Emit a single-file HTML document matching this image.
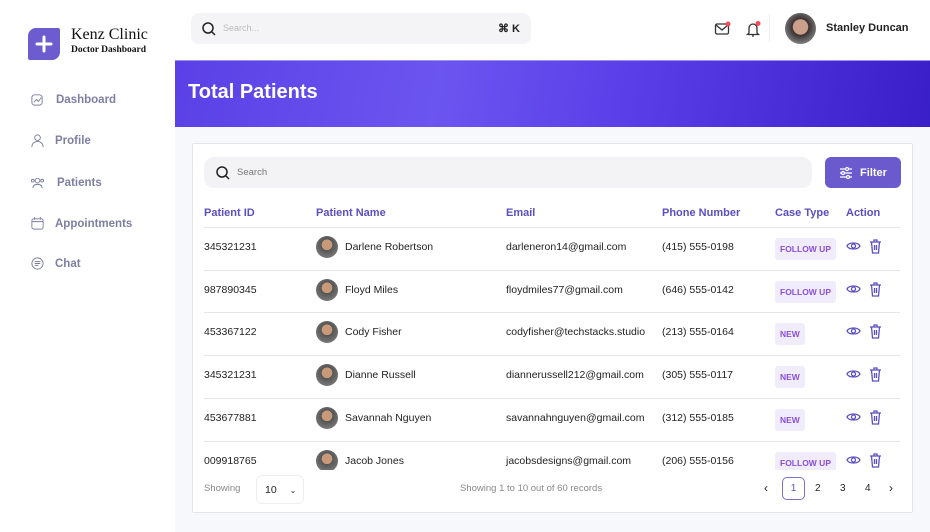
<!DOCTYPE html>
<html><head><meta charset="utf-8"><style>
*{box-sizing:border-box;margin:0;padding:0}
body{width:930px;height:532px;overflow:hidden;background:#f7f8fc;font-family:"Liberation Sans",sans-serif;position:relative;color:#222}
.abs{position:absolute}
.side{left:0;top:0;width:175px;height:532px;background:#fff}
.logo{left:28px;top:28px;width:32px;height:32px;background:#6c5ccf;border-radius:8px 2px 8px 2px}
.nav{left:30px;font-size:11.5px;font-weight:bold;color:#7d7fa3;display:flex;align-items:center;gap:10px}
.nav svg{width:15px;height:15px}
.hdr{left:175px;top:0;width:755px;height:60px;background:#fff}
.banner{left:175px;top:60px;width:755px;height:67px;background:linear-gradient(100deg,#5a40e6 0%,#6b55f0 35%,#5a3ee8 60%,#3a1fc8 100%);border-top:1px solid #9b8ff0}
.card{left:192px;top:143px;width:721px;height:370px;background:#fff;border:1px solid #e3e3ec;border-radius:2px}
.th{top:207px;font-size:11px;color:#5a4fc0;font-weight:bold}
.line{left:204px;width:696px;height:1px;background:#e6e6ea}
.cell{font-size:10.5px;color:#222}
.tag{font-size:8.5px;font-weight:bold;color:#8a4fd8;background:#f1ecfc;padding:6px 5px;border-radius:3px}
.av{width:22px;height:22px;border-radius:50%;background:radial-gradient(circle at 50% 40%,#c99a7a 0 30%,#555 32%,#8a8a8a 100%)}
</style></head><body>
<div class="abs side"></div>
<div class="abs logo"><svg width="32" height="32"><path d="M16 9v14M9 16h14" stroke="#fff" stroke-width="3" stroke-linecap="round"/></svg></div>
<div class="abs" style="left:71px;top:26px;font-family:'Liberation Serif',serif;font-size:16px;color:#111">Kenz Clinic</div>
<div class="abs" style="left:71px;top:45px;font-family:'Liberation Serif',serif;font-size:9.5px;font-weight:bold;color:#111">Doctor Dashboard</div>
<div class="abs nav" style="top:92px"><svg viewBox="0 0 16 16" fill="none" stroke="#7d7fa3"><rect x="2" y="3" width="11" height="11" rx="3"/><path d="M4 11l3-3 2 2 3-4"/></svg><span style="margin-left:1px">Dashboard</span></div>
<div class="abs nav" style="top:133px"><svg viewBox="0 0 16 16" fill="none" stroke="#7d7fa3"><circle cx="8" cy="5" r="3"/><path d="M2 15c0-4 3-6 6-6s6 2 6 6"/></svg>Profile</div>
<div class="abs nav" style="top:175px"><svg viewBox="0 0 16 16" fill="none" stroke="#7d7fa3"><circle cx="8" cy="6" r="2.5"/><path d="M3 14c0-3 2-4 5-4s5 1 5 4"/><circle cx="3" cy="6" r="1.5"/><circle cx="13" cy="6" r="1.5"/></svg><span style="margin-left:2px">Patients</span></div>
<div class="abs nav" style="top:216px"><svg viewBox="0 0 16 16" fill="none" stroke="#7d7fa3"><rect x="2" y="3" width="12" height="11" rx="2"/><path d="M2 6h12M5 1v3M11 1v3"/></svg>Appointments</div>
<div class="abs nav" style="top:256px"><svg viewBox="0 0 16 16" fill="none" stroke="#7d7fa3"><circle cx="8" cy="8" r="6"/><path d="M5 6h6M5 8h6M5 10h4"/></svg>Chat</div>

<div class="abs hdr"></div>
<div class="abs" style="left:191px;top:13px;width:340px;height:31px;background:#f4f4f6;border-radius:8px"></div>
<svg class="abs" style="left:201px;top:21px" width="15" height="15" fill="none" stroke="#222" stroke-width="1.5"><circle cx="7" cy="7" r="5"/><path d="M11 11l3 3"/></svg>
<div class="abs" style="left:223px;top:23px;font-size:9px;color:#bbb">Search...</div>
<div class="abs" style="left:498px;top:22px;font-size:11px;font-weight:bold;color:#222">⌘ K</div>
<svg class="abs" style="left:714px;top:21px" width="18" height="16" fill="none" stroke="#333" stroke-width="1.3"><rect x="1.5" y="3" width="13" height="10" rx="1.5"/><path d="M2 4l6 5 6-5"/><circle cx="14" cy="3" r="2.5" fill="#ee4b5b" stroke="none"/></svg>
<svg class="abs" style="left:745px;top:20px" width="18" height="18" fill="none" stroke="#333" stroke-width="1.3"><path d="M4 13V8a4 4 0 018 0v5l1.5 1.5h-11z M7 16h2"/><circle cx="13" cy="3.5" r="2.5" fill="#ee4b5b" stroke="none"/></svg>
<div class="abs" style="left:769px;top:14px;width:1px;height:28px;background:#eee"></div>
<div class="abs" style="left:785px;top:13px;width:31px;height:31px;border-radius:50%;background:radial-gradient(circle at 50% 45%,#caa08c 0 32%,#3a3030 35%,#777 70%,#ccc 100%)"></div>
<div class="abs" style="left:826px;top:22px;font-size:11px;font-weight:bold;color:#222">Stanley Duncan</div>

<div class="abs banner"></div>
<div class="abs" style="left:188px;top:81px;font-size:20px;font-weight:bold;color:#fff">Total Patients</div>

<div class="abs card"></div>
<div class="abs" style="left:204px;top:157px;width:608px;height:31px;background:#f3f3f5;border-radius:10px"></div>
<svg class="abs" style="left:215px;top:165px" width="15" height="15" fill="none" stroke="#222" stroke-width="1.5"><circle cx="7" cy="7" r="5"/><path d="M11 11l3 3"/></svg>
<div class="abs" style="left:237px;top:167px;font-size:9.5px;color:#777">Search</div>
<div class="abs" style="left:825px;top:157px;width:76px;height:31px;background:#6a5acd;border-radius:6px;color:#fff;font-size:11px;font-weight:bold;display:flex;align-items:center;justify-content:center;gap:7px"><svg width="14" height="12" fill="none" stroke="#fff" stroke-width="1.2"><path d="M1 2h12M1 6h12M1 10h12"/><circle cx="8" cy="2" r="1.5" fill="#6a5acd"/><circle cx="4" cy="6" r="1.5" fill="#6a5acd"/><circle cx="9" cy="10" r="1.5" fill="#6a5acd"/></svg>Filter</div>

<div class="abs th" style="left:204px">Patient ID</div>
<div class="abs th" style="left:316px">Patient Name</div>
<div class="abs th" style="left:506px">Email</div>
<div class="abs th" style="left:662px">Phone Number</div>
<div class="abs th" style="left:775px">Case Type</div>
<div class="abs th" style="left:846px">Action</div>

<div id="rows"></div>
<script>
var d=[["345321231","Darlene Robertson","darleneron14@gmail.com","(415) 555-0198","FOLLOW UP"],
["987890345","Floyd Miles","floydmiles77@gmail.com","(646) 555-0142","FOLLOW UP"],
["453367122","Cody Fisher","codyfisher@techstacks.studio","(213) 555-0164","NEW"],
["345321231","Dianne Russell","diannerussell212@gmail.com","(305) 555-0117","NEW"],
["453677881","Savannah Nguyen","savannahnguyen@gmail.com","(312) 555-0185","NEW"],
["009918765","Jacob Jones","jacobsdesigns@gmail.com","(206) 555-0156","FOLLOW UP"]];
var h="";
d.forEach(function(r,i){var y=227+i*42.7;var c=y+20;
h+='<div class="abs line" style="top:'+y+'px"></div>';
h+='<div class="abs cell" style="left:204px;top:'+(c-6)+'px">'+r[0]+'</div>';
h+='<div class="abs av" style="left:316px;top:'+(c-11)+'px"></div>';
h+='<div class="abs cell" style="left:345px;top:'+(c-6)+'px">'+r[1]+'</div>';
h+='<div class="abs cell" style="left:506px;top:'+(c-6)+'px">'+r[2]+'</div>';
h+='<div class="abs cell" style="left:662px;top:'+(c-6)+'px">'+r[3]+'</div>';
h+='<div class="abs tag" style="left:775px;top:'+(c-9)+'px">'+r[4]+'</div>';
h+='<svg class="abs" style="left:846px;top:'+(c-7)+'px" width="15" height="12" fill="none" stroke="#5a4fc0" stroke-width="1.3"><path d="M1 6c2-4 11-4 13 0-2 4-11 4-13 0z"/><circle cx="7.5" cy="6" r="2"/></svg>';
h+='<svg class="abs" style="left:869px;top:'+(c-8)+'px" width="13" height="15" fill="none" stroke="#5a4fc0" stroke-width="1.3"><path d="M1 3h11M5 3V1h3v2M2.5 3l1 11h6l1-11M5.5 6v5M7.5 6v5"/></svg>';
});
document.getElementById("rows").innerHTML=h;
</script>
<div class="abs" style="left:193px;top:470px;width:719px;height:42px;background:#fff"></div>
<div class="abs" style="left:204px;top:483px;font-size:9.5px;color:#888">Showing</div>
<div class="abs" style="left:256px;top:475px;width:48px;height:29px;border:1px solid #eee;border-radius:6px;font-size:10.5px;padding:8px 0 0 8px">10 <span style="margin-left:10px;font-size:8px">⌄</span></div>
<div class="abs" style="left:460px;top:483px;font-size:9.5px;color:#888">Showing 1 to 10 out of 60 records</div>
<div class="abs" style="left:764px;top:481px;font-size:12px">‹</div>
<div class="abs" style="left:782px;top:477px;width:23px;height:23px;border:1px solid #7a6fd0;border-radius:5px;font-size:10px;text-align:center;line-height:21px;color:#5a4fc0">1</div>
<div class="abs" style="left:815px;top:483px;font-size:10px">2</div>
<div class="abs" style="left:840px;top:483px;font-size:10px">3</div>
<div class="abs" style="left:865px;top:483px;font-size:10px">4</div>
<div class="abs" style="left:889px;top:481px;font-size:12px">›</div>
</body></html>
